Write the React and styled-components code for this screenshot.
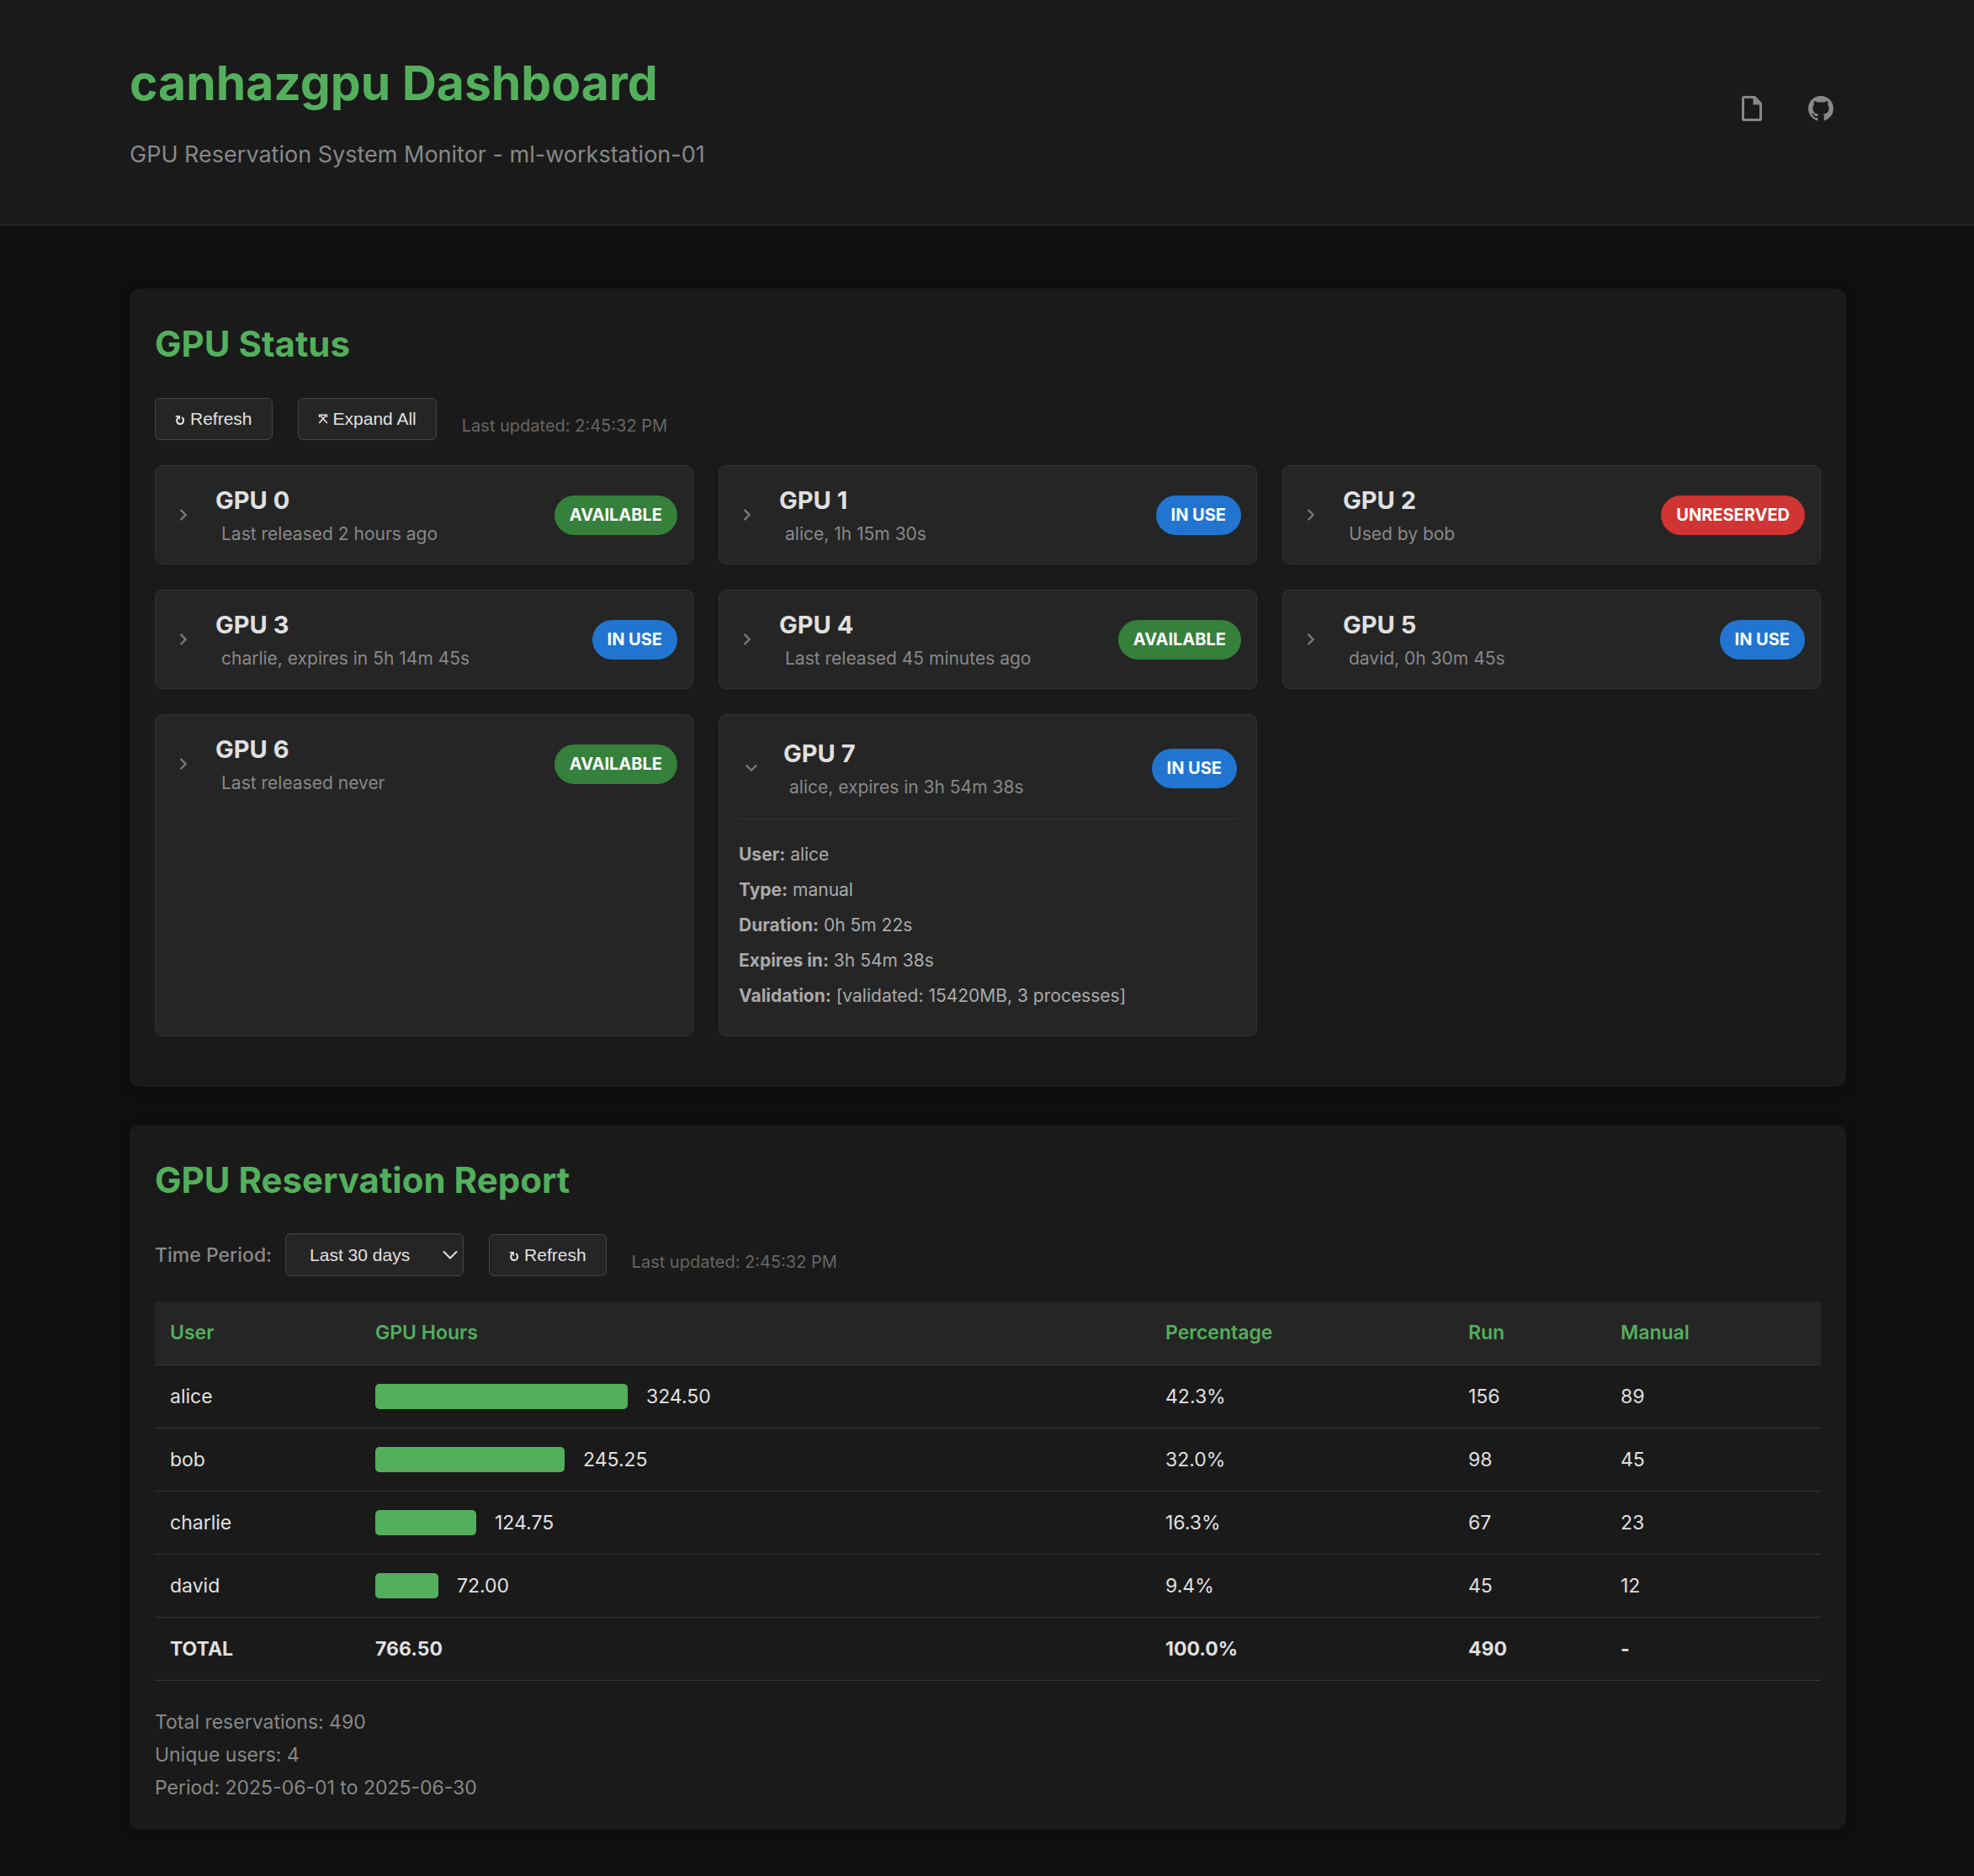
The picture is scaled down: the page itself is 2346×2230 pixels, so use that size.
import React, { useState } from "react";
import styled, { createGlobalStyle } from "styled-components";

const green = "#54af5c";

const GlobalStyle = createGlobalStyle`
  * { box-sizing: border-box; margin: 0; padding: 0; }
  html { background: #0f0f0f; }
  body {
    background: #0f0f0f;
    color: #e0e0e0;
    font-family: Inter, "Liberation Sans", sans-serif;
    font-size: 23px;
  }
`;

const Container = styled.div`
  max-width: 2100px;
  margin: 0 auto;
  padding: 0 29px 0 31px;
`;

const Header = styled.header`
  background: #1a1a1a;
  border-bottom: 1px solid #333;
  padding: 51px 0 60px;
`;

const HeaderRow = styled(Container)`
  display: flex;
  align-items: center;
  justify-content: space-between;
`;

const Title = styled.h1`
  color: ${green};
  font-size: 57px;
  font-weight: 700;
  line-height: 96px;
  margin-bottom: 14px;
`;

const Subtitle = styled.p`
  color: #888;
  font-size: 27px;
  line-height: 46px;
`;

const Links = styled.nav`
  display: flex;
  gap: 22px;
`;

const IconLink = styled.a`
  display: flex;
  justify-content: center;
  width: 60px;
  padding: 15px 0;
  color: #888;
`;

const Main = styled(Container).attrs({ as: "main" })`
  display: flex;
  flex-direction: column;
  gap: 45px;
  padding-top: 75px;
  padding-bottom: 54px;
`;

const Panel = styled.section`
  background: #1a1a1a;
  border-radius: 12px;
  padding: 30px;
  box-shadow: 0 3px 12px rgba(0, 0, 0, 0.3);
`;

const PanelTitle = styled.h2`
  color: ${green};
  font-size: 42px;
  font-weight: 700;
  line-height: 72px;
  margin-bottom: 27px;
`;

const Controls = styled.div`
  display: flex;
  align-items: flex-end;
  gap: 30px;
  height: 51px;
  margin-bottom: 30px;
`;

const Button = styled.button`
  display: flex;
  align-items: center;
  gap: 6px;
  height: 50px;
  padding: 0 23px;
  background: #252525;
  border: 1px solid #444;
  border-radius: 6px;
  color: #e0e0e0;
  font-family: "Liberation Sans", Arial, sans-serif;
  font-size: 21px;
  cursor: pointer;
`;

const Updated = styled.span`
  color: #666;
  font-size: 20px;
  line-height: 34px;
`;

const PeriodField = styled.div`
  display: flex;
  align-items: center;
  gap: 16px;
`;

const PeriodLabel = styled.label`
  color: #888;
  font-weight: 500;
`;

const SelectWrap = styled.span`
  position: relative;
  display: flex;
  color: #e0e0e0;

  svg {
    position: absolute;
    right: 6px;
    top: 20px;
    pointer-events: none;
  }
`;

const Select = styled.select`
  appearance: none;
  width: 212px;
  height: 51px;
  padding: 0 28px;
  background: #252525;
  border: 1px solid #444;
  border-radius: 6px;
  color: #e0e0e0;
  font-family: "Liberation Sans", Arial, sans-serif;
  font-size: 21px;
`;

const Grid = styled.div`
  display: grid;
  grid-template-columns: repeat(3, minmax(0, 1fr));
  gap: 30px;
  margin-bottom: 30px;
`;

const Card = styled.article`
  background: #252525;
  border: 1px solid #333;
  border-radius: 9px;
  padding: ${(p) => (p.$open ? "23px 23px 26px" : "18px")};
`;

const CardHeader = styled.div`
  display: flex;
  align-items: center;
  padding-bottom: ${(p) => (p.$open ? "20px" : "0")};
  border-bottom: ${(p) => (p.$open ? "1px solid #333" : "none")};
`;

const Toggle = styled.button`
  display: flex;
  align-items: center;
  justify-content: center;
  width: 30px;
  height: 30px;
  margin-right: 23px;
  background: none;
  border: none;
  color: #777;
  cursor: pointer;

  svg {
    transform: ${(p) => (p.$open ? "rotate(90deg)" : "none")};
  }
`;

const CardText = styled.div`
  flex: 1;
  min-width: 0;
`;

const GpuName = styled.h3`
  color: #e0e0e0;
  font-size: 29px;
  font-weight: 700;
  line-height: 46px;
`;

const GpuInfo = styled.p`
  color: #888;
  font-size: 21px;
  line-height: 34px;
  padding-left: 7px;
`;

const badgeColors = {
  AVAILABLE: "#35803b",
  "IN USE": "#2175d0",
  UNRESERVED: "#d03533",
};

const Badge = styled.span`
  height: 47px;
  padding: 0 18px;
  border-radius: 24px;
  background: ${(p) => badgeColors[p.$status]};
  color: #fff;
  font-size: 20px;
  font-weight: 700;
  line-height: 47px;
`;

const Details = styled.div`
  margin-top: 21px;
  color: #aaa;
  font-size: 21px;
  line-height: 42px;
`;

const Table = styled.table`
  width: 100%;
  table-layout: fixed;
  border-collapse: collapse;
`;

const Column = styled.col`
  width: ${(p) => (p.$width ? `${p.$width}px` : "auto")};
`;

const HeadCell = styled.th`
  height: 75px;
  padding: 0 18px;
  background: #252525;
  border-bottom: 1px solid #333;
  color: ${green};
  font-weight: 600;
  text-align: left;
`;

const Cell = styled.td`
  height: 75px;
  padding: 0 18px;
  border-bottom: 1px solid #333;
  font-weight: ${(p) => (p.$strong ? 700 : 400)};
`;

const Usage = styled.div`
  display: flex;
  align-items: center;
  gap: 22px;
`;

const Bar = styled.div`
  height: 30px;
  background: ${green};
  border-radius: 5px;
`;

const Summary = styled.div`
  margin-top: 30px;
  color: #888;
  line-height: 39px;
`;

const RefreshIcon = () => (
  <svg width="12" height="16" viewBox="0 0 12 16" fill="none" stroke="currentColor" strokeWidth="2" aria-hidden="true">
    <path d="M3.4 6.4C1 9.4 2.4 14 6 14C10.4 14 11.4 8.6 8.2 6" />
    <path d="M.6 4H6V9.4L4 7.2L2.4 5.6H.6z" fill="currentColor" stroke="none" />
  </svg>
);

const ExpandIcon = () => (
  <svg width="12" height="12" viewBox="0 0 12 12" fill="none" stroke="currentColor" strokeWidth="1.6" aria-hidden="true">
    <path d="M1.6 4V1.2H10.4V4M1.2 11L9 2.2M10.8 11L3 2.2" />
  </svg>
);

const ChevronIcon = () => (
  <svg width="12" height="16" viewBox="0 0 12 16" fill="none" stroke="currentColor" strokeWidth="2.4" aria-hidden="true">
    <path d="M2.6 1.8L8.6 8L2.6 14.2" />
  </svg>
);

const ArrowDownIcon = () => (
  <svg width="20" height="12" viewBox="0 0 20 12" fill="none" stroke="currentColor" strokeWidth="2" aria-hidden="true">
    <path d="M2 1.5l8 8l8-8" />
  </svg>
);

const FileIcon = () => (
  <svg width="24" height="30" viewBox="0 0 24 30" fill="none" aria-hidden="true">
    <path d="M3 1.5H15.3L22.5 9V27.5a1 1 0 0 1-1 1H2.5a1 1 0 0 1-1-1V2.5a1 1 0 0 1 1-1z" stroke="currentColor" strokeWidth="3" />
    <path d="M13.5 1.5V10.5H23z" fill="currentColor" />
  </svg>
);

const GithubIcon = () => (
  <svg width="30" height="30" viewBox="0 0 16 16" fill="currentColor" aria-hidden="true">
    <path d="M8 0C3.58 0 0 3.58 0 8c0 3.54 2.29 6.53 5.47 7.59.4.07.55-.17.55-.38 0-.19-.01-.82-.01-1.49-2.01.37-2.53-.49-2.69-.94-.09-.23-.48-.94-.82-1.13-.28-.15-.68-.52-.01-.53.63-.01 1.08.58 1.23.82.72 1.21 1.87.87 2.33.66.07-.52.28-.87.51-1.07-1.78-.2-3.64-.89-3.64-3.95 0-.87.31-1.59.82-2.15-.08-.2-.36-1.02.08-2.12 0 0 .67-.21 2.2.82.64-.18 1.32-.27 2-.27s1.36.09 2 .27c1.53-1.04 2.2-.82 2.2-.82.44 1.1.16 1.92.08 2.12.51.56.82 1.27.82 2.15 0 3.07-1.87 3.75-3.65 3.95.29.25.54.73.54 1.48 0 1.07-.01 1.93-.01 2.2 0 .21.15.46.55.38A8.01 8.01 0 0 0 16 8c0-4.42-3.58-8-8-8z" />
  </svg>
);

const initialGpus = [
  { id: 0, info: "Last released 2 hours ago", status: "AVAILABLE" },
  { id: 1, info: "alice, 1h 15m 30s", status: "IN USE" },
  { id: 2, info: "Used by bob", status: "UNRESERVED" },
  { id: 3, info: "charlie, expires in 5h 14m 45s", status: "IN USE" },
  { id: 4, info: "Last released 45 minutes ago", status: "AVAILABLE" },
  { id: 5, info: "david, 0h 30m 45s", status: "IN USE" },
  { id: 6, info: "Last released never", status: "AVAILABLE" },
  {
    id: 7,
    info: "alice, expires in 3h 54m 38s",
    status: "IN USE",
    details: [
      ["User", "alice"],
      ["Type", "manual"],
      ["Duration", "0h 5m 22s"],
      ["Expires in", "3h 54m 38s"],
      ["Validation", "[validated: 15420MB, 3 processes]"],
    ],
  },
];

const usage = [
  { user: "alice", bar: 300, hours: "324.50", percent: "42.3%", run: 156, manual: 89 },
  { user: "bob", bar: 225, hours: "245.25", percent: "32.0%", run: 98, manual: 45 },
  { user: "charlie", bar: 120, hours: "124.75", percent: "16.3%", run: 67, manual: 23 },
  { user: "david", bar: 75, hours: "72.00", percent: "9.4%", run: 45, manual: 12 },
];

function GpuCard({ gpu, open, onToggle }) {
  return (
    <Card $open={open}>
      <CardHeader $open={open}>
        <Toggle $open={open} aria-expanded={open} aria-label={`GPU ${gpu.id} details`} onClick={onToggle}>
          <ChevronIcon />
        </Toggle>
        <CardText>
          <GpuName>GPU {gpu.id}</GpuName>
          <GpuInfo>{gpu.info}</GpuInfo>
        </CardText>
        <Badge $status={gpu.status}>{gpu.status}</Badge>
      </CardHeader>
      {open && gpu.details && (
        <Details>
          {gpu.details.map(([name, value]) => (
            <p key={name}>
              <strong>{name}:</strong> {value}
            </p>
          ))}
        </Details>
      )}
    </Card>
  );
}

export default function App() {
  const [open, setOpen] = useState([7]);
  const toggle = (id) =>
    setOpen((ids) => (ids.includes(id) ? ids.filter((i) => i !== id) : [...ids, id]));

  return (
    <>
      <GlobalStyle />
      <Header>
        <HeaderRow>
          <div>
            <Title>canhazgpu Dashboard</Title>
            <Subtitle>GPU Reservation System Monitor - ml-workstation-01</Subtitle>
          </div>
          <Links>
            <IconLink href="#docs" aria-label="Documentation"><FileIcon /></IconLink>
            <IconLink href="#github" aria-label="GitHub"><GithubIcon /></IconLink>
          </Links>
        </HeaderRow>
      </Header>
      <Main>
        <Panel>
          <PanelTitle>GPU Status</PanelTitle>
          <Controls>
            <Button><RefreshIcon />Refresh</Button>
            <Button onClick={() => setOpen(initialGpus.map((g) => g.id))}><ExpandIcon />Expand All</Button>
            <Updated>Last updated: 2:45:32 PM</Updated>
          </Controls>
          <Grid>
            {initialGpus.map((gpu) => (
              <GpuCard key={gpu.id} gpu={gpu} open={open.includes(gpu.id)} onToggle={() => toggle(gpu.id)} />
            ))}
          </Grid>
        </Panel>
        <Panel>
          <PanelTitle>GPU Reservation Report</PanelTitle>
          <Controls>
            <PeriodField>
              <PeriodLabel htmlFor="period">Time Period:</PeriodLabel>
              <SelectWrap>
                <Select id="period" defaultValue="30">
                  <option value="7">Last 7 days</option>
                  <option value="30">Last 30 days</option>
                  <option value="90">Last 90 days</option>
                </Select>
                <ArrowDownIcon />
              </SelectWrap>
            </PeriodField>
            <Button><RefreshIcon />Refresh</Button>
            <Updated>Last updated: 2:45:32 PM</Updated>
          </Controls>
          <Table>
            <colgroup>
              <Column $width={244} />
              <Column />
              <Column $width={360} />
              <Column $width={181} />
              <Column $width={256} />
            </colgroup>
            <thead>
              <tr>
                <HeadCell scope="col">User</HeadCell>
                <HeadCell scope="col">GPU Hours</HeadCell>
                <HeadCell scope="col">Percentage</HeadCell>
                <HeadCell scope="col">Run</HeadCell>
                <HeadCell scope="col">Manual</HeadCell>
              </tr>
            </thead>
            <tbody>
              {usage.map((row) => (
                <tr key={row.user}>
                  <Cell>{row.user}</Cell>
                  <Cell>
                    <Usage>
                      <Bar style={{ width: row.bar }} />
                      {row.hours}
                    </Usage>
                  </Cell>
                  <Cell>{row.percent}</Cell>
                  <Cell>{row.run}</Cell>
                  <Cell>{row.manual}</Cell>
                </tr>
              ))}
              <tr>
                <Cell $strong>TOTAL</Cell>
                <Cell $strong>766.50</Cell>
                <Cell $strong>100.0%</Cell>
                <Cell $strong>490</Cell>
                <Cell $strong>-</Cell>
              </tr>
            </tbody>
          </Table>
          <Summary>
            <p>Total reservations: 490</p>
            <p>Unique users: 4</p>
            <p>Period: 2025-06-01 to 2025-06-30</p>
          </Summary>
        </Panel>
      </Main>
    </>
  );
}
